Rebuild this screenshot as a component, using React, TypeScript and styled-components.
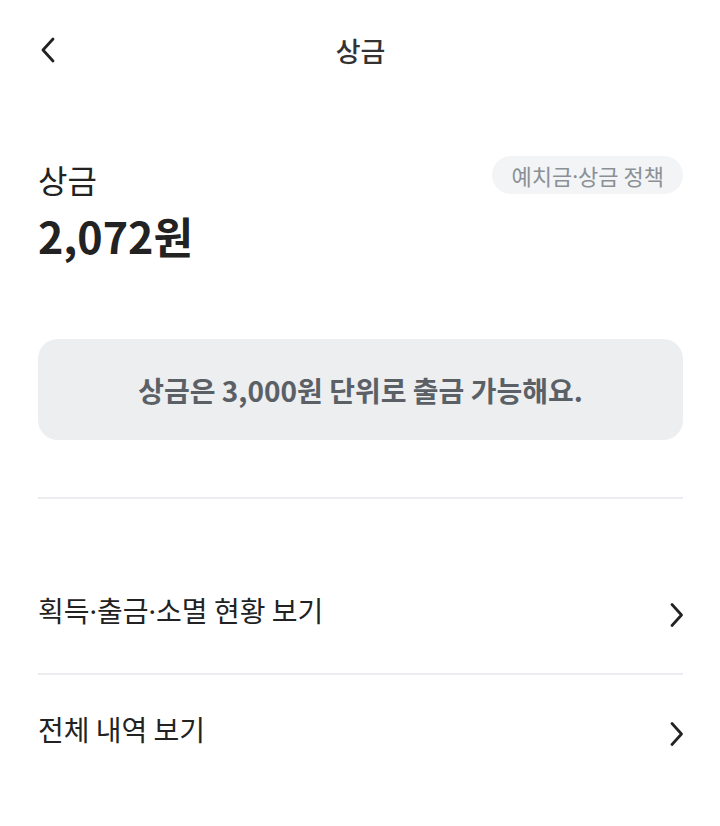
import { createGlobalStyle, styled } from "styled-components";

const GlobalStyle = createGlobalStyle`
  html, body {
    margin: 0;
    padding: 0;
    background: #ffffff;
    font-family: "Noto Sans CJK KR", "Noto Sans", sans-serif;
    color: #222222;
  }
`;

const Page = styled.div`
  width: 720px;
  min-height: 826px;
  box-sizing: border-box;
  padding: 0 37px 0 38px;
`;

const Header = styled.header`
  position: relative;
  height: 100px;
  display: flex;
  align-items: center;
  justify-content: center;
`;

const BackButton = styled.button`
  position: absolute;
  left: 0;
  top: 36px;
  border: 0;
  padding: 0;
  background: none;
  display: flex;
`;

const Title = styled.h1`
  margin: 0;
  font-size: 27px;
  font-weight: 500;
  color: #333333;
`;

const Summary = styled.section`
  display: flex;
  justify-content: space-between;
  align-items: flex-start;
  padding-top: 56px;
`;

const Label = styled.div`
  font-size: 32px;
  line-height: 44px;
  font-weight: 400;
  margin-top: 1px;
`;

const Amount = styled.div`
  font-size: 43px;
  line-height: 52px;
  font-weight: 700;
  margin-top: 8px;
`;

const Dot = styled.span`
  font-family: "Noto Sans", sans-serif;
  font-weight: 400;
`;

const PolicyPill = styled.button`
  border: 0;
  height: 38px;
  padding: 0 19px;
  border-radius: 19px;
  background: #f2f4f5;
  color: #8b9095;
  font-family: inherit;
  font-size: 22px;
  display: flex;
  align-items: center;
`;

const Notice = styled.div`
  margin-top: 78px;
  height: 101px;
  border-radius: 20px;
  background: #eceef0;
  display: flex;
  align-items: center;
  justify-content: center;
  font-size: 28px;
  font-weight: 700;
  color: #5b6066;
`;

const Divider = styled.hr<{ $top?: number }>`
  margin: ${(p) => p.$top ?? 0}px 0 0;
  border: 0;
  height: 2px;
  background: #eaecef;
`;

const Menu = styled.nav`
  margin-top: 57px;
`;

const MenuRow = styled.a`
  display: flex;
  align-items: center;
  justify-content: space-between;
  height: 117px;
  color: #222222;
  text-decoration: none;
  font-size: 28px;
`;

const MenuText = styled.span`
  margin-top: -10px;
`;

function ChevronRight() {
  return (
    <svg width="16" height="28" viewBox="0 0 16 28" fill="none">
      <path d="M5 3.5 L14.5 14 L5 24.5" stroke="#222" strokeWidth="2.7" strokeLinecap="round" strokeLinejoin="round" />
    </svg>
  );
}

function withDots(text: string) {
  return text.split("·").flatMap((part, i) => (i === 0 ? [part] : [<Dot key={i}>·</Dot>, part]));
}

const menuItems = ["획득·출금·소멸 현황 보기", "전체 내역 보기"];

export default function App() {
  return (
    <>
      <GlobalStyle />
      <Page>
        <Header>
          <BackButton aria-label="뒤로">
            <svg width="20" height="28" viewBox="0 0 20 28" fill="none">
              <path d="M15 3 L5 14 L15 25" stroke="#222" strokeWidth="2.8" strokeLinecap="round" strokeLinejoin="round" />
            </svg>
          </BackButton>
          <Title>상금</Title>
        </Header>
        <Summary>
          <div>
            <Label>상금</Label>
            <Amount>2,072원</Amount>
          </div>
          <PolicyPill>{withDots("예치금·상금 정책")}</PolicyPill>
        </Summary>
        <Notice>상금은 3,000원 단위로 출금 가능해요.</Notice>
        <Divider $top={57} />
        <Menu>
          {menuItems.map((item, i) => (
            <div key={item}>
              {i > 0 && <Divider />}
              <MenuRow href="#">
                <MenuText>{withDots(item)}</MenuText>
                <ChevronRight />
              </MenuRow>
            </div>
          ))}
        </Menu>
      </Page>
    </>
  );
}
